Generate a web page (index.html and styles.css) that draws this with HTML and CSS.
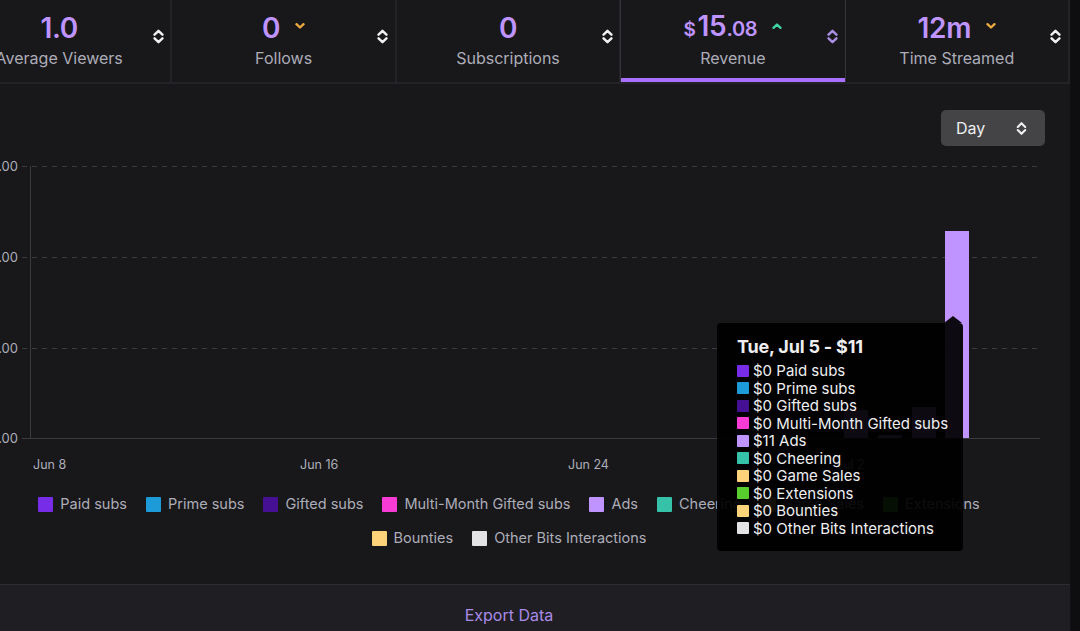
FILE: index.html
```html
<!DOCTYPE html>
<html lang="en">
<head>
  <meta charset="UTF-8" />
  <title>Stream Summary - Revenue</title>
  <link rel="stylesheet" href="styles.css">
</head>
<body>

  <div class="panel">
    <div class="stats">
      <div class="stat">
        <div class="stat-body">
          <div class="stat-value"><span class="num">1.0</span></div>
          <div class="stat-label">Average Viewers</div>
        </div>
        <svg class="sort" viewBox="0 0 10 16"><path d="M1.3 6.3 5 2.6 8.7 6.3M1.3 9.7 5 13.4 8.7 9.7"/></svg>
      </div>
      <div class="stat">
        <div class="stat-body">
          <div class="stat-value"><span class="num">0</span><svg class="trend down" viewBox="0 0 10 6"><path d="M1.5 1.2 5 4.5 8.5 1.2"/></svg></div>
          <div class="stat-label">Follows</div>
        </div>
        <svg class="sort" viewBox="0 0 10 16"><path d="M1.3 6.3 5 2.6 8.7 6.3M1.3 9.7 5 13.4 8.7 9.7"/></svg>
      </div>
      <div class="stat">
        <div class="stat-body">
          <div class="stat-value"><span class="num">0</span></div>
          <div class="stat-label">Subscriptions</div>
        </div>
        <svg class="sort" viewBox="0 0 10 16"><path d="M1.3 6.3 5 2.6 8.7 6.3M1.3 9.7 5 13.4 8.7 9.7"/></svg>
      </div>
      <div class="stat active">
        <div class="stat-body">
          <div class="stat-value"><span class="num"><span class="cur">$</span>15<span class="cents">.08</span></span><svg class="trend up" viewBox="0 0 10 6"><path d="M1.5 4.8 5 1.5 8.5 4.8"/></svg></div>
          <div class="stat-label">Revenue</div>
        </div>
        <svg class="sort" viewBox="0 0 10 16"><path d="M1.3 6.3 5 2.6 8.7 6.3M1.3 9.7 5 13.4 8.7 9.7"/></svg>
      </div>
      <div class="stat">
        <div class="stat-body">
          <div class="stat-value"><span class="num">12m</span><svg class="trend down" viewBox="0 0 10 6"><path d="M1.5 1.2 5 4.5 8.5 1.2"/></svg></div>
          <div class="stat-label">Time Streamed</div>
        </div>
        <svg class="sort" viewBox="0 0 10 16"><path d="M1.3 6.3 5 2.6 8.7 6.3M1.3 9.7 5 13.4 8.7 9.7"/></svg>
      </div>
    </div>

    <div class="chart-area">
      <div class="toolbar">
        <div class="select">
          <span>Day</span>
          <svg viewBox="0 0 10 16"><path d="M1.5 6.5 5 3 8.5 6.5M1.5 9.5 5 13 8.5 9.5"/></svg>
        </div>
      </div>

      <svg class="chart" width="1122" height="330" viewBox="0 0 1122 330">
        <g transform="translate(52,-150)">
          <g class="ylabels">
            <text x="18" y="171">$15.00</text>
            <text x="18" y="262">$10.00</text>
            <text x="18" y="353">$5.00</text>
            <text x="18" y="443">$0.00</text>
          </g>
          <g class="grid">
            <line x1="22" y1="166.5" x2="1040" y2="166.5"/>
            <line x1="22" y1="257.5" x2="1040" y2="257.5"/>
            <line x1="22" y1="348.5" x2="1040" y2="348.5"/>
          </g>
          <line class="axis" x1="22" y1="438.5" x2="1040" y2="438.5"/>
          <line class="axis" x1="30.5" y1="166" x2="30.5" y2="438"/>
          <g class="bars">
            <rect x="844" y="410" width="24" height="28"/>
            <rect x="878" y="435" width="24" height="3"/>
            <rect x="912" y="407" width="24" height="31"/>
            <rect x="945" y="231" width="24" height="207"/>
          </g>
          <g class="xlabels">
            <text x="33" y="469">Jun 8</text>
            <text x="300" y="469">Jun 16</text>
            <text x="568" y="469">Jun 24</text>
            <text x="836" y="469">Jul 2</text>
          </g>
        </g>
      </svg>

      <div class="legend">
        <div class="legend-item"><i class="sw paid"></i>Paid subs</div>
        <div class="legend-item"><i class="sw prime"></i>Prime subs</div>
        <div class="legend-item"><i class="sw gifted"></i>Gifted subs</div>
        <div class="legend-item"><i class="sw multi"></i>Multi-Month Gifted subs</div>
        <div class="legend-item"><i class="sw ads"></i>Ads</div>
        <div class="legend-item"><i class="sw cheer"></i>Cheering</div>
        <div class="legend-item"><i class="sw game"></i>Game Sales</div>
        <div class="legend-item"><i class="sw ext"></i>Extensions</div>
        <div class="legend-item"><i class="sw bounty"></i>Bounties</div>
        <div class="legend-item"><i class="sw other"></i>Other Bits Interactions</div>
      </div>

      <div class="tooltip">
        <div class="tooltip-title">Tue, Jul 5 - $11</div>
        <div class="tooltip-row"><i class="sw paid"></i>$0 Paid subs</div>
        <div class="tooltip-row"><i class="sw prime"></i>$0 Prime subs</div>
        <div class="tooltip-row"><i class="sw gifted"></i>$0 Gifted subs</div>
        <div class="tooltip-row"><i class="sw multi"></i>$0 Multi-Month Gifted subs</div>
        <div class="tooltip-row"><i class="sw ads"></i>$11 Ads</div>
        <div class="tooltip-row"><i class="sw cheer"></i>$0 Cheering</div>
        <div class="tooltip-row"><i class="sw game"></i>$0 Game Sales</div>
        <div class="tooltip-row"><i class="sw ext"></i>$0 Extensions</div>
        <div class="tooltip-row"><i class="sw bounty"></i>$0 Bounties</div>
        <div class="tooltip-row"><i class="sw other"></i>$0 Other Bits Interactions</div>
      </div>
    </div>

    <div class="footer">
      <a class="export" href="#">Export Data</a>
    </div>
  </div>

</body>
</html>
```

FILE: styles.css
```css
body {
  margin: 0;
  background: #0e0e10;
  font-family: Inter, "Noto Sans", sans-serif;
  color: #efeff1;
  overflow: hidden;
  width: 1080px;
  height: 631px;
}

.panel {
  width: 1122px;
  margin-left: -52px;
  background: #18181b;
  border-right: 1px solid #111113;
}

/* stat tabs */
.stats {
  display: grid;
  grid-template-columns: repeat(5, 1fr);
  border-bottom: 2px solid #232327;
  height: 82px;
}

.stat {
  display: grid;
  grid-template-columns: 24px 1fr 24px;
  border-right: 2px solid #232327;
  background: #18181b;
}

.stat.active {
  box-shadow: inset 0 -4px 0 #a970ff;
  border-left: 1px solid #34343a;
  border-right: 1px solid #34343a;
  margin-left: -1px;
}

.stat-body {
  grid-column: 2;
  display: flex;
  flex-direction: column;
  align-items: center;
  padding-top: 11px;
}

.stat-value {
  display: flex;
  align-items: center;
  gap: 15px;
  height: 34px;
}

.num {
  font-size: 28px;
  font-weight: 600;
  color: #bf94ff;
  letter-spacing: -0.3px;
  line-height: 34px;
}

.num .cur {
  font-size: 19px;
  margin-right: 2px;
}

.num .cents {
  font-size: 20px;
}

.trend {
  width: 10px;
  height: 6px;
  fill: none;
  stroke-width: 2.4;
  stroke-linecap: round;
  stroke-linejoin: round;
  margin-top: -4px;
}

.trend.down { stroke: #eba93f; }
.trend.up { stroke: #3ed5a0; }

.stat-label {
  margin-top: 3px;
  font-size: 16px;
  line-height: 20px;
  color: #adadb8;
}

.sort {
  grid-column: 3;
  width: 11px;
  height: 17px;
  margin-top: 28px;
  justify-self: center;
  fill: none;
  stroke: #efeff1;
  stroke-width: 2.3;
  stroke-linecap: round;
  stroke-linejoin: round;
}

.stat.active .sort {
  stroke: #a88ee0;
}

/* chart */
.chart-area {
  position: relative;
  height: 500px;
}

.toolbar {
  display: flex;
  justify-content: flex-end;
  padding: 26px 25px 0 0;
}

.select {
  display: flex;
  align-items: center;
  justify-content: space-between;
  width: 104px;
  height: 36px;
  box-sizing: border-box;
  padding: 0 18px 0 15px;
  background: #444447;
  border-radius: 5px;
  font-size: 16px;
  color: #efeff1;
}

.select svg {
  width: 11px;
  height: 17px;
  fill: none;
  stroke: #efeff1;
  stroke-width: 2;
  stroke-linecap: round;
  stroke-linejoin: round;
}

.chart {
  display: block;
  margin-top: 4px;
}

.ylabels text {
  text-anchor: end;
  font-size: 13px;
  fill: #adadb8;
}

.xlabels text {
  font-size: 12.5px;
  fill: #adadb8;
}

.grid line {
  stroke: #3a3a3f;
  stroke-dasharray: 5 5;
}

.axis {
  stroke: #3a3a3f;
}

.bars rect {
  fill: #bf94ff;
}

/* legend */
.legend {
  display: flex;
  flex-wrap: wrap;
  justify-content: center;
  column-gap: 19px;
  row-gap: 14px;
  padding: 14px 60px 0;
}

.legend-item {
  display: flex;
  align-items: center;
  gap: 7px;
  font-size: 14.5px;
  line-height: 20px;
  color: #adadb8;
}

.legend-item .sw {
  width: 15px;
  height: 15px;
}

.sw {
  display: block;
  border-radius: 1px;
}

.sw.paid { background: #772ce8; }
.sw.prime { background: #1d9bd9; }
.sw.gifted { background: #451093; }
.sw.multi { background: #f83bd4; }
.sw.ads { background: #bf94ff; }
.sw.cheer { background: #35c2a9; }
.sw.game { background: #ffd37a; }
.sw.ext { background: #57cd2e; }
.sw.bounty { background: #ffd37a; }
.sw.other { background: #e3e3e6; }

/* tooltip */
.tooltip {
  position: absolute;
  left: 769px;
  top: 239px;
  width: 246px;
  box-sizing: border-box;
  padding: 13px 10px 14px 20px;
  background: rgba(0, 0, 0, 0.93);
  border-radius: 4px;
  color: #efeff1;
}

.tooltip::before {
  content: "";
  position: absolute;
  top: -7px;
  left: 227px;
  border-left: 9px solid transparent;
  border-right: 9px solid transparent;
  border-bottom: 7px solid rgba(0, 0, 0, 0.93);
}

.tooltip-title {
  font-size: 18px;
  font-weight: 700;
  line-height: 22px;
  margin-bottom: 4px;
  letter-spacing: -0.2px;
}

.tooltip-row {
  display: flex;
  align-items: center;
  gap: 4px;
  font-size: 15px;
  line-height: 17.5px;
  white-space: nowrap;
}

.tooltip-row .sw {
  width: 12px;
  height: 12px;
}

/* footer */
.footer {
  border-top: 1px solid #2c2c31;
  background: #1f1f23;
  padding: 20px 0 6px;
  text-align: center;
}

.export {
  font-size: 16px;
  line-height: 20px;
  color: #a98ae6;
  text-decoration: none;
}
```
